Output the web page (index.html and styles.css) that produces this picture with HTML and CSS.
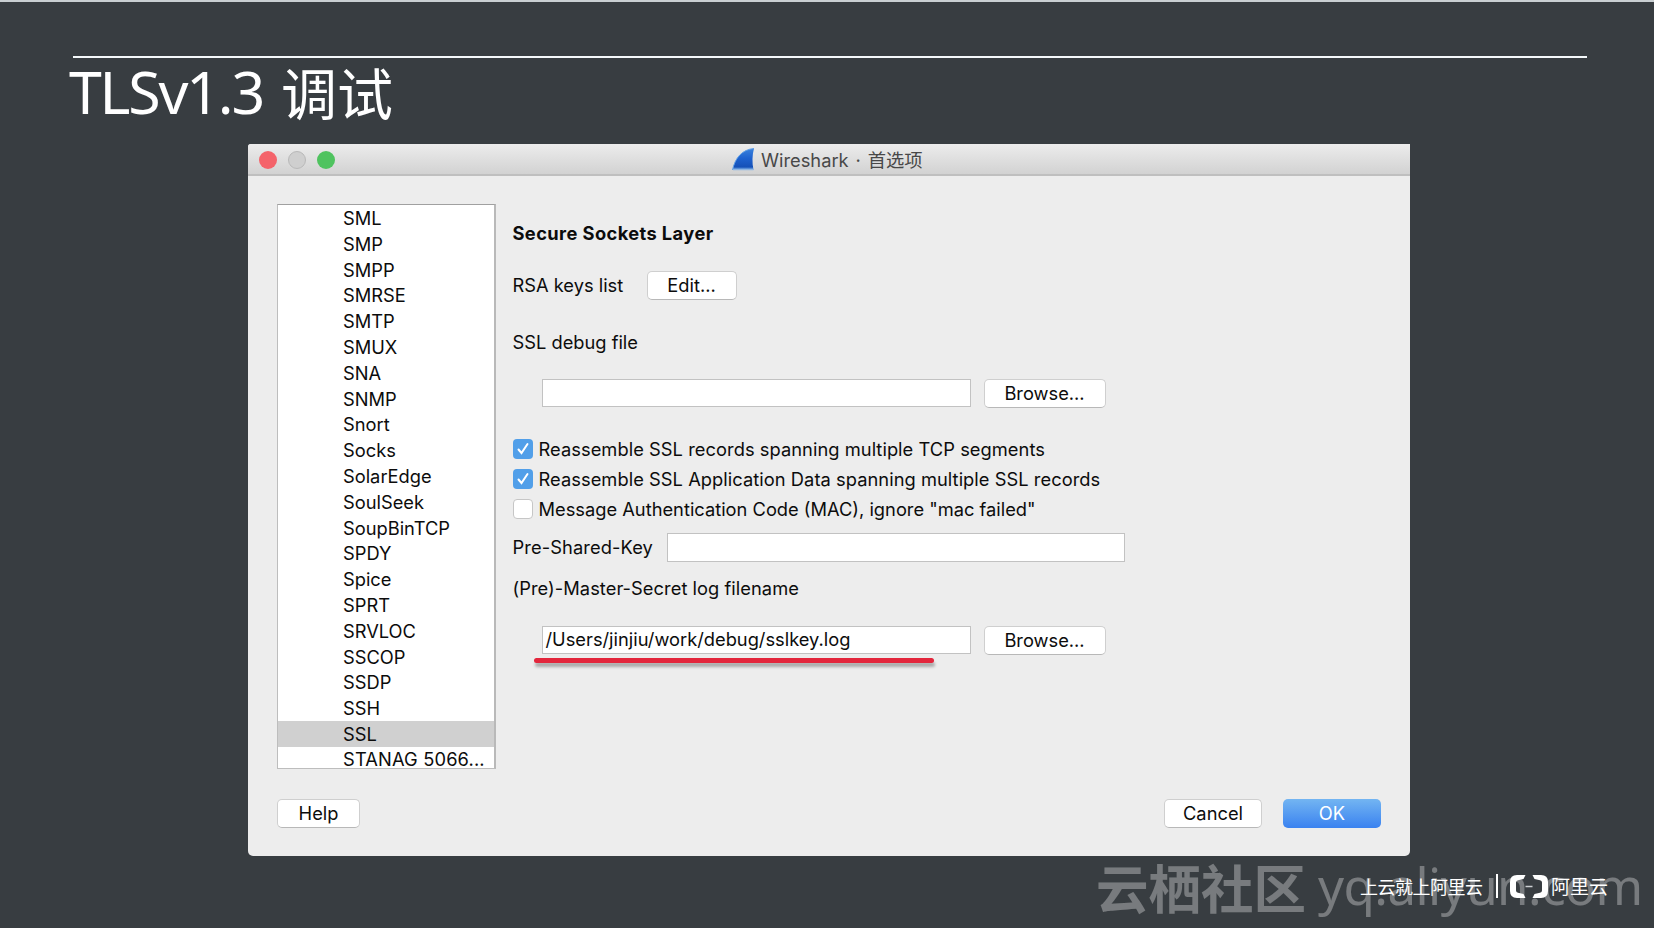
FILE: index.html
```html
<!DOCTYPE html>
<html lang="zh-CN">
<head>
<meta charset="utf-8">
<title>TLSv1.3 调试</title>
<link rel="stylesheet" href="styles.css">
</head>
<body>
<main class="slide">
  <header class="slide-head">
    <h1 class="slide-title"><span class="title-latin">TLSv1.3</span><span class="title-cjk">调试</span></h1>
  </header>

  <section class="window">
    <div class="titlebar">
      <div class="lights"><i class="light red"></i><i class="light gray"></i><i class="light green"></i></div>
      <div class="caption">
        <svg class="fin" viewBox="0 0 23 23" width="23" height="23">
          <defs><linearGradient id="fin" x1="0" y1="0" x2="0" y2="1"><stop offset="0" stop-color="#3b82dc"/><stop offset=".45" stop-color="#1e62cf"/><stop offset=".85" stop-color="#1551b8"/><stop offset="1" stop-color="#6fa6e4"/></linearGradient></defs>
          <path d="M.5 22C3 10 10 1.500 22 .500C20.200 7 20 15 21.500 22Z" fill="url(#fin)"/>
          <path d="M.5 22C3 10 10 1.500 22 .500" fill="none" stroke="#62a0e6" stroke-width="1"/>
          <path d="M1 21.500H21.500" stroke="#8fb6e2" stroke-width="1.500"/>
        </svg>
        <span class="caption-text">Wireshark · 首选项</span>
      </div>
    </div>

    <div class="content">
      <ul class="protocols">
        <li>SML</li><li>SMP</li><li>SMPP</li><li>SMRSE</li><li>SMTP</li><li>SMUX</li><li>SNA</li><li>SNMP</li><li>Snort</li><li>Socks</li><li>SolarEdge</li><li>SoulSeek</li><li>SoupBinTCP</li><li>SPDY</li><li>Spice</li><li>SPRT</li><li>SRVLOC</li><li>SSCOP</li><li>SSDP</li><li>SSH</li><li class="selected">SSL</li><li class="last">STANAG 5066...</li>
      </ul>
      <div class="settings">
        <h2 class="heading">Secure Sockets Layer</h2>
        <div class="row keys"><span>RSA keys list</span><button class="btn edit">Edit...</button></div>
        <div class="row debug-label"><span>SSL debug file</span></div>
        <div class="row file"><div class="field"></div><button class="btn browse">Browse...</button></div>
        <div class="checks">
          <label class="check"><i class="box on"><svg viewBox="0 0 20 20"><path d="M5.500 10.500L8.500 14L14.500 5"/></svg></i><span class="stretch">Reassemble SSL records spanning multiple TCP segments</span></label>
          <label class="check"><i class="box on"><svg viewBox="0 0 20 20"><path d="M5.500 10.500L8.500 14L14.500 5"/></svg></i><span class="stretch">Reassemble SSL Application Data spanning multiple SSL records</span></label>
          <label class="check"><i class="box"></i><span>Message Authentication Code (MAC), ignore "mac failed"</span></label>
        </div>
        <div class="row psk"><span>Pre-Shared-Key</span><div class="field wide"></div></div>
        <div class="row master"><span>(Pre)-Master-Secret log filename</span></div>
        <div class="row file"><div class="field"><span class="path">/Users/jinjiu/work/debug/sslkey.log</span></div><button class="btn browse">Browse...</button></div>
        <div class="marker"></div>
      </div>
    </div>

    <footer class="actions">
      <button class="btn help">Help</button>
      <button class="btn cancel">Cancel</button>
      <button class="btn ok">OK</button>
    </footer>
  </section>

  <div class="brand">
    <span class="slogan">上云就上阿里云</span>
    <i class="bar"></i>
    <svg class="logo" viewBox="0 0 38 23" width="38" height="23"><path d="M15.500 0H7Q0 0 0 7V16Q0 23 7 23H15.500L13.500 19L8 17.800Q6 17.300 6 15.500V7.500Q6 5.700 8 5.200L13.500 4ZM22.500 0H31Q38 0 38 7V16Q38 23 31 23H22.500L24.500 19L30 17.800Q32 17.300 32 15.500V7.500Q32 5.700 30 5.200L24.500 4Z" fill="#fff"/><path d="M15.500 11.500H22.500" stroke="#ccd0d2" stroke-width="1.500"/></svg>
    <span class="brand-name">阿里云</span>
  </div>
  <div class="watermark"><b>云栖社区</b><span>yq.aliyun.com</span></div>
</main>
</body>
</html>
```
FILE: styles.css
```css
* { box-sizing: border-box; }
body { margin: 0; background: #383d41; }
.slide {
  position: relative;
  width: 1654px;
  height: 928px;
  overflow: hidden;
  border-top: 2px solid #c9cfd2;
  background: #383d41;
  font-family: Inter, "Noto Sans CJK SC", sans-serif;
  font-size: 18.3px;
  color: #0c0c0c;
}
.slide-head {
  height: 88px;
  margin: 54px 67px 0 73px;
  border-top: 2px solid #f4f8fa;
}
.slide-title {
  display: flex;
  margin: -2px 0 0 -4px;
  color: #fff;
  font-weight: 400;
  line-height: 72px;
  white-space: nowrap;
}
.title-latin { width: 212px; font: 400 59px/71px "Noto Sans", sans-serif; letter-spacing: -2.200px; }
.title-cjk { font: 400 56px/70px "Noto Sans CJK SC", sans-serif; }

.window {
  width: 1162px;
  height: 712px;
  margin-left: 248px;
  border-radius: 3px 0 5px 5px;
  background: #ededed;
  overflow: hidden;
}
.titlebar {
  display: flex;
  align-items: center;
  height: 32px;
  padding: 1px 0 0 11px;
  border-bottom: 2px solid #bfbfbf;
  background: linear-gradient(#ececec, #d2d2d2);
}
.lights { display: flex; gap: 11px; width: 473px; }
.light { width: 18px; height: 18px; border-radius: 50%; }
.red { background: #f4636a; }
.gray { background: #cfcfcf; border: 1px solid #b9b9b9; }
.green { background: #4fc35f; }
.caption { display: flex; align-items: center; gap: 6px; color: #484848; white-space: nowrap; }
.caption-text { word-spacing: 1.800px; padding-bottom: 2px; }
.fin { display: block; }

.content { display: flex; height: 593px; padding: 28px 0 0 29px; }
.protocols {
  width: 219px;
  height: 565px;
  margin: 0 16px 0 0;
  padding: 0;
  overflow: hidden;
  list-style: none;
  background: #fff;
  border: 1px solid #bdbdbd;
  border-top-color: #a0a0a0;
  border-right: 2px solid #b9b9b9;
}
.protocols li { height: 25.810px; padding-left: 65px; line-height: 27px; white-space: nowrap; }
.protocols .selected { background: #d0d0d0; }
.protocols .last { height: 21px; line-height: 25px; letter-spacing: .15px; }

.settings { flex: 1; padding-left: .5px; white-space: nowrap; }
.heading { margin: 16px 0 0; font-size: 18.3px; font-weight: 700; line-height: 26px; letter-spacing: .4px; }
.row { display: flex; align-items: center; }
.btn {
  height: 29px;
  padding: 0 0 1px;
  border: 1px solid #cfcfcf;
  border-bottom-color: #b8b8b8;
  border-radius: 5px;
  background: #fff;
  color: #0c0c0c;
  font: inherit;
  line-height: 25px;
}
.keys { height: 29px; margin-top: 25px; }
.keys span { width: 134px; padding-bottom: 2px; }
.edit { width: 90px; }
.debug-label { height: 26px; margin-top: 29px; }
.file { height: 29px; margin: 24px 0 0 29px; align-items: flex-start; }
.field { width: 429px; height: 28px; margin-right: 13px; border: 1px solid #c2c2c2; background: #fff; padding-left: 3px; line-height: 25px; }
.browse { width: 122px; }
.checks { margin-top: 26px; }
.check { display: flex; align-items: center; height: 30px; gap: 6px; }
.stretch { letter-spacing: .05px; }
.box { width: 20px; height: 20px; border: 1px solid #c6c6c6; border-radius: 4px; background: #fff; }
.box.on { border: 0; background: #519fe9; }
.box svg { display: block; fill: none; stroke: #fff; stroke-width: 2; stroke-linecap: round; }
.psk { height: 29px; margin-top: 9px; }
.psk span { width: 154px; letter-spacing: .1px; margin-top: -2px; }
.field.wide { width: 458px; height: 29px; }
.master { height: 26px; margin-top: 13px; letter-spacing: .05px; }
.master + .file { margin-top: 25px; }
.marker { width: 400px; height: 5px; margin: 3px 0 0 21px; border-radius: 3px; background: #e3263c; box-shadow: 1px 4px 3px rgba(0,0,0,.28); }

.actions { display: flex; padding: 30px 29px 0 29px; }
.help { width: 83px; margin-right: auto; }
.cancel { width: 98px; margin-right: 21px; }
.ok { width: 98px; color: #fff; border: 0; background: linear-gradient(#73b5f2, #3a82f0); }

.brand {
  position: absolute;
  left: 1360px;
  top: 870px;
  display: flex;
  align-items: center;
  height: 28px;
  color: #fff;
  font-family: "Noto Sans CJK SC", sans-serif;
  white-space: nowrap;
}
.slogan { width: 136px; font-size: 18px; letter-spacing: -.5px; padding-bottom: 1px; }
.bar { width: 2px; height: 24px; background: #fff; margin-right: 12px; }
.logo { margin-right: 3px; }
.brand-name { font-size: 19px; padding-bottom: 1px; }
.watermark {
  position: absolute;
  left: 1096px;
  top: 844px;
  display: flex;
  line-height: 80px;
  color: rgba(255,255,255,.32);
  white-space: nowrap;
}
.watermark b { width: 222px; font: 700 52.500px/80px "Noto Sans CJK SC", sans-serif; }
.watermark span { font: 400 51px/78px "Noto Sans", sans-serif; letter-spacing: -.55px; }
```
